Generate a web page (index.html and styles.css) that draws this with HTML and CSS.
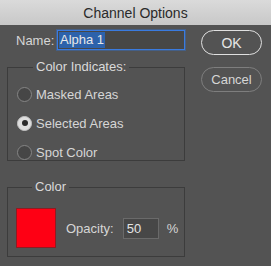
FILE: index.html
```html
<!DOCTYPE html>
<html>
<head>
<meta charset="utf-8">
<link rel="stylesheet" href="styles.css">
</head>
<body>
<div class="dialog">
  <div class="titlebar">Channel Options</div>
  <div class="main">
    <div class="left">
      <div class="name-row">
        <span class="label">Name:</span>
        <div class="text-input"><span class="sel">Alpha 1</span></div>
      </div>
      <fieldset class="group group-ind">
        <legend>Color Indicates:</legend>
        <div class="radio-row"><span class="radio"></span><span>Masked Areas</span></div>
        <div class="radio-row"><span class="radio checked"></span><span>Selected Areas</span></div>
        <div class="radio-row"><span class="radio"></span><span>Spot Color</span></div>
      </fieldset>
      <fieldset class="group group-color">
        <legend>Color</legend>
        <div class="color-row">
          <div class="swatch"></div>
          <span class="op-label">Opacity:</span>
          <div class="num-input">50</div>
          <span class="pct">%</span>
        </div>
      </fieldset>
    </div>
    <div class="buttons">
      <div class="btn btn-ok">OK</div>
      <div class="btn btn-cancel">Cancel</div>
    </div>
  </div>
</div>
</body>
</html>
```
FILE: styles.css
```css
html, body {
  margin: 0;
  padding: 0;
}
body {
  width: 271px;
  height: 266px;
  background: #535353;
  font-family: "Liberation Sans", Arial, sans-serif;
  font-size: 13px;
  color: #d6d6d6;
  overflow: hidden;
}
.titlebar {
  height: 25px;
  background: linear-gradient(#dadada, #c8c8c8);
  color: #2a2a2a;
  font-size: 14px;
  display: flex;
  align-items: center;
  justify-content: center;
}
.main {
  display: flex;
  padding: 0 9px 0 7px;
}
.left {
  width: 178px;
}
.name-row {
  display: flex;
  align-items: center;
  height: 20px;
  margin-top: 5px;
}
.label {
  padding-left: 9px;
}
.text-input {
  margin-left: auto;
  width: 128px;
  height: 20px;
  box-sizing: border-box;
  background: #474747;
  border: 1px solid #3a7be0;
  box-shadow: 0 0 0 1px rgba(50, 110, 200, 0.45);
  display: flex;
  align-items: center;
  padding-left: 1px;
}
.sel {
  background: #2d62ab;
  color: #e8e8e8;
  line-height: 16px;
  padding: 0 1px 0 1px;
}
.group {
  margin: 0;
  padding: 0;
  border: 1px solid #3c3c3c;
  min-width: 0;
}
.group legend {
  padding: 0 3px;
  margin-left: 16px;
  line-height: 16px;
  font-size: 13px;
  color: #dadada;
}
.group-ind {
  margin-top: 9px;
  padding: 11px 0 0 9px;
  display: flex;
  flex-direction: column;
  gap: 13px;
}
.radio-row {
  display: flex;
  align-items: center;
  height: 16px;
  gap: 4px;
}
.radio {
  width: 15px;
  height: 15px;
  box-sizing: border-box;
  border-radius: 50%;
  background: #464646;
  border: 1px solid #858585;
  display: flex;
  align-items: center;
  justify-content: center;
}
.radio.checked {
  background: #dedede;
  border-color: #c4c4c4;
}
.radio.checked::after {
  content: "";
  width: 6px;
  height: 6px;
  border-radius: 50%;
  background: #2a2a2a;
}
.group-color {
  margin-top: 18px;
  padding: 13px 0 8px 8px;
}
.color-row {
  display: flex;
  align-items: center;
}
.swatch {
  width: 40px;
  height: 40px;
  box-sizing: border-box;
  background: #fe0014;
  border: 1px solid #8e1c22;
}
.op-label {
  margin-left: 10px;
}
.num-input {
  margin-left: 9px;
  width: 36px;
  height: 21px;
  box-sizing: border-box;
  background: #474747;
  border: 1px solid #6a6a6a;
  color: #e4e4e4;
  padding-left: 3px;
  line-height: 19px;
}
.pct {
  margin-left: 8px;
}
.buttons {
  margin-left: auto;
  margin-top: 5px;
  display: flex;
  flex-direction: column;
  gap: 12px;
}
.btn {
  width: 61px;
  height: 25px;
  box-sizing: border-box;
  border-radius: 13px;
  display: flex;
  align-items: center;
  justify-content: center;
}
.btn-ok {
  border: 1px solid #e0e0e0;
  font-size: 14px;
  color: #e6e6e6;
}
.btn-cancel {
  border: 1px solid #7e7e7e;
  color: #d6d6d6;
}
```
